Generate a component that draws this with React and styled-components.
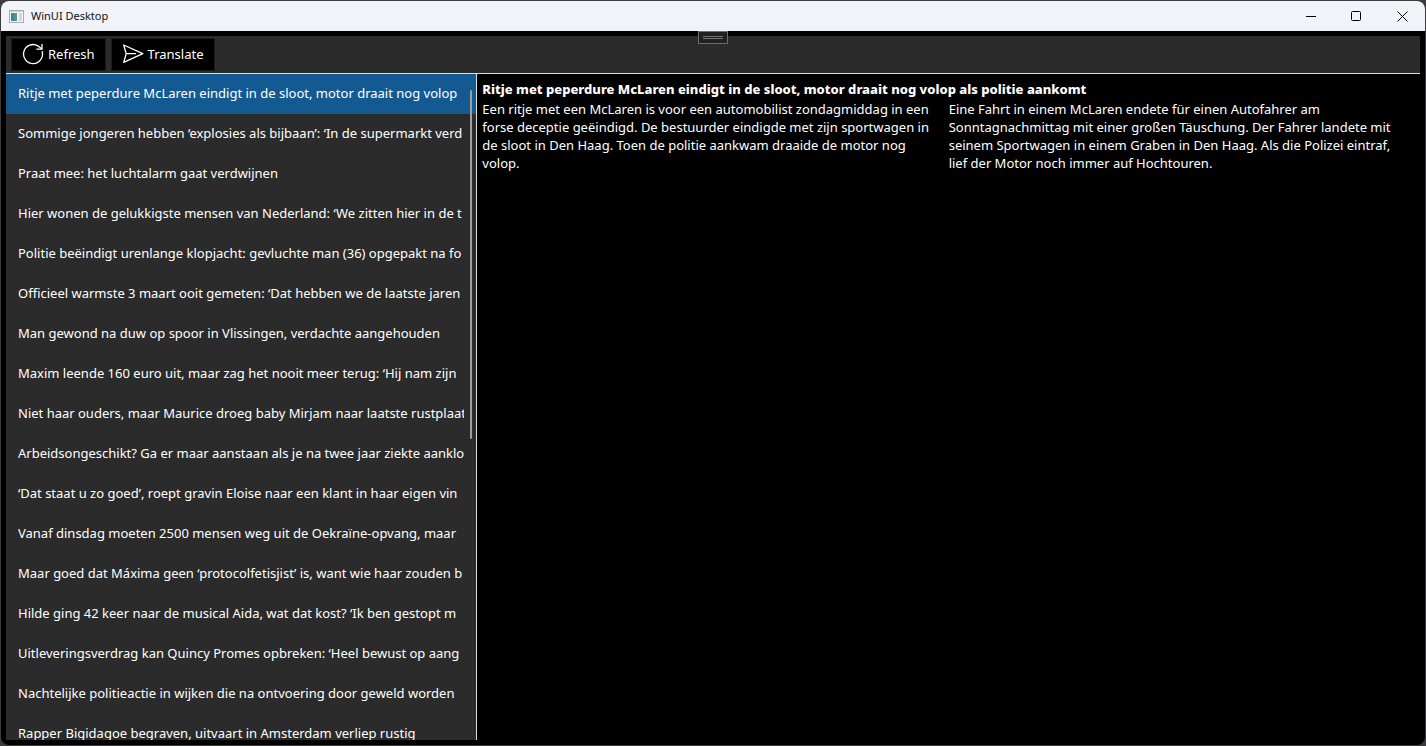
import React, { useState } from "react";
import styled, { createGlobalStyle } from "styled-components";

const GlobalStyle = createGlobalStyle`
  * { box-sizing: border-box; }
  body {
    margin: 0;
    background: #303036;
    color: #fff;
    font-family: "Noto Sans", "Open Sans", sans-serif;
    font-size: 13px;
    line-height: 18px;
  }
  button { font: inherit; color: inherit; }
`;

const Desktop = styled.div`
  height: 100vh;
  padding: 1px;
  background: #3c3c3e;
`;

const Window = styled.div`
  position: relative;
  display: flex;
  flex-direction: column;
  height: 100%;
  overflow: hidden;
  border-radius: 8px;
  background: #000;
`;

const TitleBar = styled.header`
  display: flex;
  align-items: center;
  flex: none;
  height: 30px;
  padding-left: 8px;
  background: #f2f2f9;
  color: #111;
`;

const WindowTitle = styled.h1`
  flex: 1;
  margin: 0 0 0 7px;
  font-size: 11px;
  font-weight: 400;
  line-height: 16px;
`;

const CaptionButton = styled.button`
  display: flex;
  align-items: center;
  justify-content: center;
  width: 46px;
  height: 28px;
  padding: 0;
  border: 0;
  background: transparent;
`;

const DebugHandle = styled.button`
  position: absolute;
  top: 30px;
  left: 50%;
  display: flex;
  flex-direction: column;
  justify-content: center;
  gap: 1px;
  width: 30px;
  height: 13px;
  margin-left: -15px;
  padding: 0 4px;
  border: 1px solid #6e6e6e;
  background: #202020;
`;

const HandleLine = styled.span`
  height: 1px;
  background: #747474;
`;

const Client = styled.div`
  display: flex;
  flex-direction: column;
  flex: 1;
  min-height: 0;
  padding: 5px;
`;

const Toolbar = styled.div`
  display: flex;
  flex: none;
  gap: 5px;
  height: 38px;
  padding: 2px 5px;
  border-bottom: 1px solid #dcdcdc;
  background: #2b2b2b;
`;

const ToolButton = styled.button`
  display: flex;
  align-items: center;
  gap: 4px;
  height: 33px;
  padding: 0 10px 2px;
  border: 1px solid #1c1c1c;
  background: #000;
`;

const Panes = styled.div`
  display: grid;
  grid-template-columns: minmax(0, 1fr) minmax(0, 2fr);
  flex: 1;
  min-height: 0;
`;

const ListPane = styled.nav`
  position: relative;
  overflow: hidden;
  border-right: 1px solid #dcdcdc;
  background: #2b2b2b;
`;

const Headlines = styled.ul`
  margin: 0;
  padding: 0;
  list-style: none;
`;

const HeadlineButton = styled.button`
  display: block;
  width: 100%;
  height: 40px;
  padding: 0 12px 2px;
  border: 0;
  background: ${(p) => (p.$selected ? "#145a92" : "transparent")};
  text-align: left;
`;

const HeadlineText = styled.span`
  display: block;
  overflow: hidden;
  white-space: nowrap;
`;

const ScrollThumb = styled.div`
  position: absolute;
  top: 16px;
  right: 4px;
  width: 2px;
  height: 349px;
  border-radius: 1px;
  background: #9f9f9f;
`;

const Article = styled.article`
  padding: 5px;
`;

const ArticleTitle = styled.h2`
  margin: 0 0 1px;
  font-size: 13px;
  font-weight: 800;
  line-height: 20px;
`;

const Columns = styled.div`
  display: grid;
  grid-template-columns: 1fr 1fr;
`;

const Paragraph = styled.p`
  margin: 0;
  padding-right: 8px;
`;

const headlines = [
  "Ritje met peperdure McLaren eindigt in de sloot, motor draait nog volop",
  "Sommige jongeren hebben ‘explosies als bijbaan’: ‘In de supermarkt verd",
  "Praat mee: het luchtalarm gaat verdwijnen",
  "Hier wonen de gelukkigste mensen van Nederland: ‘We zitten hier in de t",
  "Politie beëindigt urenlange klopjacht: gevluchte man (36) opgepakt na fo",
  "Officieel warmste 3 maart ooit gemeten: ‘Dat hebben we de laatste jaren",
  "Man gewond na duw op spoor in Vlissingen, verdachte aangehouden",
  "Maxim leende 160 euro uit, maar zag het nooit meer terug: ‘Hij nam zijn",
  "Niet haar ouders, maar Maurice droeg baby Mirjam naar laatste rustplaat",
  "Arbeidsongeschikt? Ga er maar aanstaan als je na twee jaar ziekte aanklo",
  "‘Dat staat u zo goed’, roept gravin Eloise naar een klant in haar eigen vin",
  "Vanaf dinsdag moeten 2500 mensen weg uit de Oekraïne-opvang, maar",
  "Maar goed dat Máxima geen ‘protocolfetisjist’ is, want wie haar zouden b",
  "Hilde ging 42 keer naar de musical Aida, wat dat kost? ‘Ik ben gestopt m",
  "Uitleveringsverdrag kan Quincy Promes opbreken: ‘Heel bewust op aang",
  "Nachtelijke politieactie in wijken die na ontvoering door geweld worden",
  "Rapper Bigidagoe begraven, uitvaart in Amsterdam verliep rustig",
];

function AppIcon() {
  return (
    <svg width="15" height="13" viewBox="0 0 15 13" aria-hidden="true">
      <rect x="0.5" y="0.5" width="14" height="12" fill="#f4f6f8" stroke="#a9adb3" />
      <rect x="1" y="1" width="13" height="1" fill="#c9ced4" />
      <rect x="2" y="3" width="6" height="8" fill="#4d9a8a" />
      <rect x="2" y="3" width="3" height="8" fill="#4b7f9f" />
      <rect x="10" y="3" width="3" height="8" fill="#d3d6da" />
    </svg>
  );
}

function RefreshIcon() {
  return (
    <svg width="22" height="22" viewBox="0 0 22 22" fill="none" stroke="#fff" strokeWidth="1.3" aria-hidden="true">
      <path d="M20.1 8.2A9.5 9.5 0 1 1 16.2 3.1L19.6 5.8" />
      <path d="M20 1V6.2H14.4" />
    </svg>
  );
}

function SendIcon() {
  return (
    <svg width="22" height="22" viewBox="0 0 22 22" fill="none" stroke="#fff" strokeWidth="1.3" strokeLinejoin="round" aria-hidden="true">
      <path d="M1.7 2L20.8 10.7L1.7 19.4L4.2 10.7Z" />
      <path d="M4.2 10.7H14" />
    </svg>
  );
}

export default function App() {
  const [selected, setSelected] = useState(0);
  return (
    <>
      <GlobalStyle />
      <Desktop>
        <Window>
          <TitleBar>
            <AppIcon />
            <WindowTitle>WinUI Desktop</WindowTitle>
            <CaptionButton aria-label="Minimize">
              <svg width="11" height="11" viewBox="0 0 11 11">
                <path d="M1 5.5H11" stroke="#000" />
              </svg>
            </CaptionButton>
            <CaptionButton aria-label="Maximize">
              <svg width="11" height="11" viewBox="0 0 11 11" fill="none">
                <rect x="0.5" y="0.5" width="9" height="9" rx="1" stroke="#000" />
              </svg>
            </CaptionButton>
            <CaptionButton aria-label="Close">
              <svg width="11" height="11" viewBox="0 0 11 11">
                <path d="M0.5 0.5L10.5 10.5M10.5 0.5L0.5 10.5" stroke="#000" />
              </svg>
            </CaptionButton>
          </TitleBar>
          <Client>
            <Toolbar role="toolbar">
              <ToolButton>
                <RefreshIcon />
                Refresh
              </ToolButton>
              <ToolButton>
                <SendIcon />
                Translate
              </ToolButton>
            </Toolbar>
            <Panes>
              <ListPane aria-label="Headlines">
                <Headlines>
                  {headlines.map((text, i) => (
                    <li key={text}>
                      <HeadlineButton $selected={i === selected} onClick={() => setSelected(i)}>
                        <HeadlineText>{text}</HeadlineText>
                      </HeadlineButton>
                    </li>
                  ))}
                </Headlines>
                <ScrollThumb />
              </ListPane>
              <Article>
                <ArticleTitle>
                  Ritje met peperdure McLaren eindigt in de sloot, motor draait nog volop als politie
                  aankomt
                </ArticleTitle>
                <Columns>
                  <Paragraph lang="nl">
                    Een ritje met een McLaren is voor een automobilist zondagmiddag in een forse
                    deceptie geëindigd. De bestuurder eindigde met zijn sportwagen in de sloot in Den
                    Haag. Toen de politie aankwam draaide de motor nog volop.
                  </Paragraph>
                  <Paragraph lang="de">
                    Eine Fahrt in einem McLaren endete für einen Autofahrer am Sonntagnachmittag mit
                    einer großen Täuschung. Der Fahrer landete mit seinem Sportwagen in einem Graben
                    in Den Haag. Als die Polizei eintraf, lief der Motor noch immer auf Hochtouren.
                  </Paragraph>
                </Columns>
              </Article>
            </Panes>
          </Client>
          <DebugHandle aria-label="Debug toolbar">
            <HandleLine />
            <HandleLine />
          </DebugHandle>
        </Window>
      </Desktop>
    </>
  );
}
